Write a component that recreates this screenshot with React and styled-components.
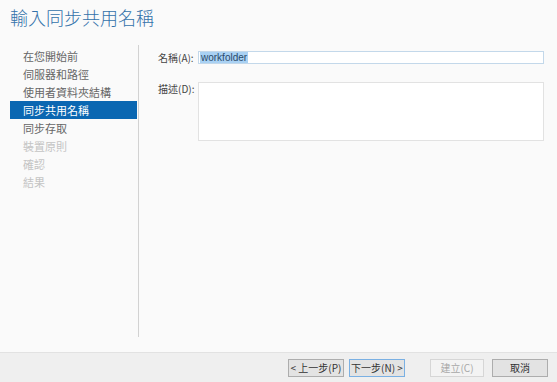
import React from "react";
import styled, { createGlobalStyle } from "styled-components";

const Global = createGlobalStyle`
  html, body { margin: 0; padding: 0; background: #fafafa; }
  * { box-sizing: border-box; }
`;

const CJK = `"Noto Sans CJK TC", "Noto Sans CJK SC", "Noto Sans", sans-serif`;

const Page = styled.div`
  width: 557px;
  height: 382px;
  display: flex;
  flex-direction: column;
  background: #fafafa;
  font-family: ${CJK};
  overflow: hidden;
`;

const Title = styled.h1`
  margin: 0;
  height: 45px;
  padding: 6px 0 0 10px;
  font-size: 18px;
  line-height: 22px;
  font-weight: 300;
  color: #3372aa;
  letter-spacing: 0;
`;

const Body = styled.div`
  flex: 1;
  display: flex;
  padding-bottom: 15px;
`;

const Nav = styled.nav`
  width: 139px;
  padding: 2px 0 0 10px;
  border-right: 1px solid #d2d2d2;
  display: flex;
  flex-direction: column;
`;

const NavItem = styled.div`
  width: 127px;
  height: 18px;
  padding-left: 13px;
  font-size: 11px;
  line-height: 18px;
  white-space: nowrap;
  color: ${(p) => (p.$active ? "#ffffff" : p.$disabled ? "#c4c4c4" : "#666666")};
  background: ${(p) => (p.$active ? "#0a67b2" : "transparent")};
`;

const Content = styled.div`
  flex: 1;
  padding: 6px 13px 0 19px;
  display: flex;
  flex-direction: column;
  gap: 18px;
`;

const Field = styled.div`
  display: grid;
  grid-template-columns: 40px 1fr;
  align-items: start;
`;

const Label = styled.label`
  font-size: 10px;
  line-height: 13px;
  color: #444;
  white-space: nowrap;
`;

const Input = styled.div`
  height: 13px;
  border: 1px solid #c3d8ea;
  background: #ffffff;
  padding-left: 1px;
  display: flex;
  align-items: center;
`;

const Selected = styled.span`
  font-family: "Liberation Sans", Arial, sans-serif;
  font-size: 10px;
  line-height: 11px;
  color: #2a4a6a;
  background: #a9d1f3;
  padding: 0 1px;
`;

const TextArea = styled.div`
  height: 59px;
  border: 1px solid #e2e2e2;
  background: #ffffff;
`;

const Footer = styled.div`
  height: 30px;
  background: #efefef;
  border-top: 1px solid #e2e2e2;
  display: flex;
  justify-content: flex-end;
  align-items: flex-start;
  padding: 6px 9px 0 0;
`;

const Button = styled.div`
  width: ${(p) => p.$w || 56}px;
  height: 18px;
  margin-left: ${(p) => p.$ml || 0}px;
  border: 1px solid ${(p) => (p.$default ? "#7ab0e3" : p.$disabled ? "#d6d6d6" : "#adadad")};
  background: ${(p) => (p.$disabled ? "#f3f3f3" : "#e3e3e3")};
  color: ${(p) => (p.$disabled ? "#a8a8a8" : "#333")};
  font-size: 10px;
  line-height: 16px;
  text-align: center;
  white-space: nowrap;
`;

const navItems = [
  { t: "在您開始前" },
  { t: "伺服器和路徑" },
  { t: "使用者資料夾結構" },
  { t: "同步共用名稱", active: true },
  { t: "同步存取" },
  { t: "裝置原則", disabled: true },
  { t: "確認", disabled: true },
  { t: "結果", disabled: true },
];

export default function App() {
  return (
    <Page>
      <Global />
      <Title>輸入同步共用名稱</Title>
      <Body>
        <Nav>
          {navItems.map((n) => (
            <NavItem key={n.t} $active={n.active} $disabled={n.disabled}>
              {n.t}
            </NavItem>
          ))}
        </Nav>
        <Content>
          <Field>
            <Label>名稱(A):</Label>
            <Input>
              <Selected>workfolder</Selected>
            </Input>
          </Field>
          <Field>
            <Label>描述(D):</Label>
            <TextArea />
          </Field>
        </Content>
      </Body>
      <Footer>
        <Button>&lt; 上一步(P)</Button>
        <Button $ml={5} $default>下一步(N) &gt;</Button>
        <Button $ml={25} $w={54} $disabled>建立(C)</Button>
        <Button $ml={8}>取消</Button>
      </Footer>
    </Page>
  );
}
